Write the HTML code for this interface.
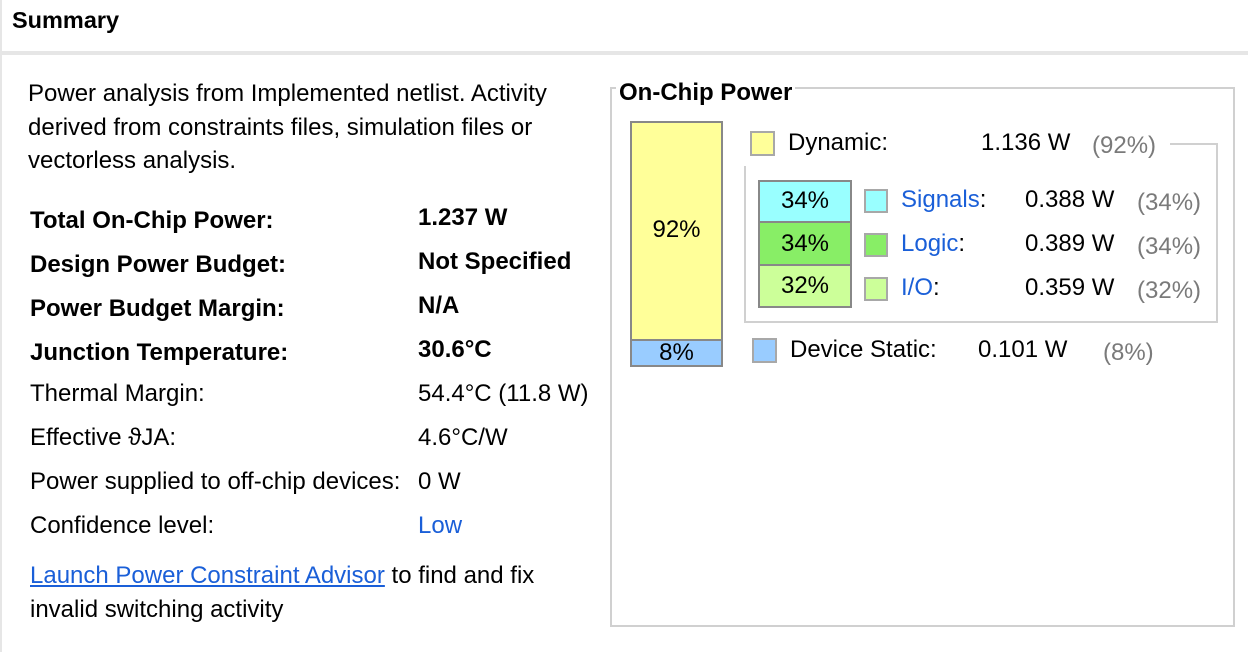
<!DOCTYPE html>
<html><head><meta charset="utf-8"><style>
body{margin:0;width:1248px;height:652px;background:#fff;position:relative;overflow:hidden;font-family:"Liberation Sans",sans-serif;font-size:24px;color:#000}
.t{position:absolute;line-height:26px;white-space:nowrap}
.b{font-weight:bold}
.blue{color:#1a5fd8}
.g{color:#7a7a7a}
.abs{position:absolute;box-sizing:border-box}
.sq{position:absolute;box-sizing:border-box;border:2px solid #a8a8a8}
</style></head><body>
<div class="abs" style="left:0;top:0;width:2px;height:652px;background:#e6e6e6"></div>
<div class="t b" style="left:12px;top:7px;font-size:23.5px">Summary</div>
<div class="abs" style="left:0;top:51px;width:1248px;height:4px;background:#e6e6e6"></div>

<div class="t" style="left:28px;top:81px">Power analysis from Implemented netlist. Activity</div>
<div class="t" style="left:28px;top:115px">derived from constraints files, simulation files or</div>
<div class="t" style="left:28px;top:148px">vectorless analysis.</div>

<div class="t b" style="left:30px;top:208px">Total On-Chip Power:</div><div class="t b" style="left:418px;top:205px">1.237 W</div>
<div class="t b" style="left:30px;top:252px">Design Power Budget:</div><div class="t b" style="left:418px;top:249px">Not Specified</div>
<div class="t b" style="left:30px;top:296px">Power Budget Margin:</div><div class="t b" style="left:418px;top:293px">N/A</div>
<div class="t b" style="left:30px;top:340px">Junction Temperature:</div><div class="t b" style="left:418px;top:337px">30.6°C</div>
<div class="t" style="left:30px;top:381px">Thermal Margin:</div><div class="t" style="left:418px;top:381px">54.4°C (11.8 W)</div>
<div class="t" style="left:30px;top:425px">Effective ϑJA:</div><div class="t" style="left:418px;top:425px">4.6°C/W</div>
<div class="t" style="left:30px;top:469px">Power supplied to off-chip devices:</div><div class="t" style="left:418px;top:469px">0 W</div>
<div class="t" style="left:30px;top:513px">Confidence level:</div><div class="t blue" style="left:418px;top:513px">Low</div>
<div class="t" style="left:30px;top:563px"><span class="blue" style="text-decoration:underline">Launch Power Constraint Advisor</span> to find and fix</div>
<div class="t" style="left:30px;top:597px">invalid switching activity</div>

<div class="abs" style="left:610px;top:87px;width:625px;height:540px;border:2px solid #d0d0d0"></div>
<div class="t b" style="left:616px;top:80px;background:#fff;padding:0 3px">On-Chip Power</div>

<div class="abs" style="left:630px;top:121px;width:93px;height:246px;border:2px solid #888;background:#ffff99"></div>
<div class="abs" style="left:632px;top:339px;width:89px;height:26px;border-top:2px solid #888;background:#99ccff"></div>
<div class="t" style="left:630px;width:93px;text-align:center;top:217px">92%</div>
<div class="t" style="left:630px;width:93px;text-align:center;top:340px">8%</div>

<div class="sq" style="left:750px;top:131px;width:25px;height:25px;background:#ffff99"></div>
<div class="t" style="left:788px;top:130px">Dynamic:</div>
<div class="t" style="left:981px;top:130px">1.136 W</div>
<div class="t g" style="left:1092px;top:133px">(92%)</div>
<div class="abs" style="left:1170px;top:143px;width:48px;height:180px;border-top:2px solid #d0d0d0;border-right:2px solid #d0d0d0"></div>
<div class="abs" style="left:744px;top:166px;width:474px;height:157px;border-left:2px solid #d0d0d0;border-bottom:2px solid #d0d0d0"></div>

<div class="abs" style="left:758px;top:180px;width:94px;height:128px;border:2px solid #888;background:#ccff99"></div>
<div class="abs" style="left:760px;top:182px;width:90px;height:41px;background:#99ffff;border-bottom:2px solid #888"></div>
<div class="abs" style="left:760px;top:223px;width:90px;height:43px;background:#88ee66;border-bottom:2px solid #888"></div>
<div class="t" style="left:758px;width:94px;text-align:center;top:188px">34%</div>
<div class="t" style="left:758px;width:94px;text-align:center;top:231px">34%</div>
<div class="t" style="left:758px;width:94px;text-align:center;top:273px">32%</div>

<div class="sq" style="left:864px;top:189px;width:24px;height:24px;background:#99ffff"></div>
<div class="sq" style="left:864px;top:233px;width:24px;height:24px;background:#88ee66"></div>
<div class="sq" style="left:864px;top:277px;width:24px;height:24px;background:#ccff99"></div>
<div class="t" style="left:901px;top:187px"><span class="blue">Signals</span>:</div>
<div class="t" style="left:901px;top:231px"><span class="blue">Logic</span>:</div>
<div class="t" style="left:901px;top:275px"><span class="blue">I/O</span>:</div>
<div class="t" style="left:1025px;top:187px">0.388 W</div>
<div class="t" style="left:1025px;top:231px">0.389 W</div>
<div class="t" style="left:1025px;top:275px">0.359 W</div>
<div class="t g" style="left:1137px;top:190px">(34%)</div>
<div class="t g" style="left:1137px;top:234px">(34%)</div>
<div class="t g" style="left:1137px;top:278px">(32%)</div>

<div class="sq" style="left:752px;top:338px;width:25px;height:25px;background:#99ccff"></div>
<div class="t" style="left:790px;top:337px">Device Static:</div>
<div class="t" style="left:978px;top:337px">0.101 W</div>
<div class="t g" style="left:1103px;top:340px">(8%)</div>
</body></html>
